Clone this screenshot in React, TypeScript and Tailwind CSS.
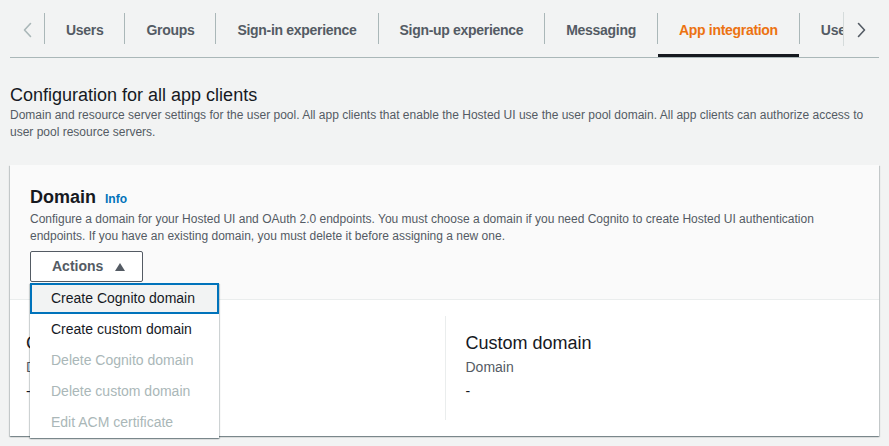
import React from "react";

const tabs = [
  "Users",
  "Groups",
  "Sign-in experience",
  "Sign-up experience",
  "Messaging",
  "App integration",
  "User pool properties",
];

const items = [
  { label: "Create Cognito domain", disabled: false, active: true },
  { label: "Create custom domain", disabled: false, active: false },
  { label: "Delete Cognito domain", disabled: true, active: false },
  { label: "Delete custom domain", disabled: true, active: false },
  { label: "Edit ACM certificate", disabled: true, active: false },
];

function Sep() {
  return <div className="w-px h-[31px] bg-[#aab7b8] flex-none" />;
}

function Chevron({ dir, color }: { dir: "left" | "right"; color: string }) {
  return (
    <svg width="11" height="16" viewBox="0 0 11 16" fill="none">
      <path
        d={dir === "left" ? "M8.5 1.5 L2.5 8 L8.5 14.5" : "M2.5 1.5 L8.5 8 L2.5 14.5"}
        stroke={color}
        strokeWidth="1.6"
        strokeLinecap="round"
        strokeLinejoin="round"
      />
    </svg>
  );
}

export default function App() {
  return (
    <div className="min-h-screen bg-[#f2f3f3] font-['Liberation_Sans',Arial,sans-serif] text-[#16191f]">
      <div className="px-[10px]">
        {/* Tabs */}
        <div className="flex items-center h-[58px] border-b border-[#aab7b8]">
          <button className="w-[34px] h-full flex items-center justify-center flex-none pt-[3px]">
            <Chevron dir="left" color="#aab7b8" />
          </button>
          <Sep />
          <div className="flex-1 h-full flex items-center overflow-hidden whitespace-nowrap">
            {tabs.map((t, i) => {
              const active = t === "App integration";
              return (
                <React.Fragment key={t}>
                  {i > 0 && <Sep />}
                  <div
                    className={
                      "relative h-full flex items-center flex-none px-[21px] pt-[4px] text-[14px] font-bold tracking-[-0.3px] " +
                      (active ? "text-[#ec7211]" : "text-[#545b64]")
                    }
                  >
                    {t}
                    {active && (
                      <div className="absolute left-0 right-0 bottom-0 h-[3px] bg-[#16191f]" />
                    )}
                  </div>
                </React.Fragment>
              );
            })}
          </div>
          <div className="w-px h-[34px] bg-[#d5dbdb] flex-none" />
          <button className="w-[35px] h-full flex items-center justify-center flex-none pt-[3px]">
            <Chevron dir="right" color="#545b64" />
          </button>
        </div>

        {/* Page heading */}
        <h2 className="mt-[26px] text-[18px] leading-[22px] font-normal text-[#16191f]">
          Configuration for all app clients
        </h2>
        <p className="mt-[1px] text-[12px] leading-[17px] text-[#545b64]">
          Domain and resource server settings for the user pool. All app clients that enable the Hosted UI use the
          user pool domain. All app clients can authorize access to user pool resource servers.
        </p>

        {/* Card */}
        <div className="mt-[24px] bg-white shadow-[0_1px_1px_0_rgba(0,28,36,0.3),1px_1px_1px_0_rgba(0,28,36,0.15),-1px_1px_1px_0_rgba(0,28,36,0.15)]">
          <div className="bg-[#fafafa] border-b border-[#eaeded] pt-[21px] px-[20px] pb-[17px]">
            <div className="flex items-baseline">
              <h3 className="text-[18px] leading-[22px] font-bold text-[#16191f]">Domain</h3>
              <span className="ml-[9px] text-[12px] font-bold text-[#0073bb]">Info</span>
            </div>
            <p className="mt-[3px] text-[12px] leading-[17px] text-[#545b64]">
              Configure a domain for your Hosted UI and OAuth 2.0 endpoints. You must choose a domain if you need
              Cognito to create Hosted UI authentication endpoints. If you have an existing domain, you must delete it
              before assigning a new one.
            </p>
            <div className="relative mt-[6px] inline-block align-top">
              <button className="h-[31px] w-[113px] flex items-center pl-[21px] border border-[#545b64] rounded-[2px] bg-white text-[14px] font-bold text-[#545b64]">
                Actions
                <svg className="ml-[12px]" width="10" height="8" viewBox="0 0 10 8">
                  <polygon points="5,0 10,8 0,8" fill="#545b64" />
                </svg>
              </button>
              <div className="absolute left-0 top-[32px] w-[189px] bg-white z-10 shadow-[0_1px_1px_0_rgba(0,28,36,0.3),1px_1px_1px_0_rgba(0,28,36,0.15),-1px_1px_1px_0_rgba(0,28,36,0.15)]">
                {items.map((it) => (
                  <div
                    key={it.label}
                    className={
                      "h-[31px] flex items-center px-[19px] border-2 text-[14px] whitespace-nowrap " +
                      (it.active ? "border-[#0073bb] bg-[#f2f3f3] " : "border-transparent ") +
                      (it.disabled ? "text-[#aab7b8]" : "text-[#16191f]")
                    }
                  >
                    {it.label}
                  </div>
                ))}
              </div>
            </div>
          </div>

          <div className="px-[16px] pt-[16px] pb-[16px] grid grid-cols-2">
            <div className="pt-[16px] pb-[18px] pr-[20px]">
              <div className="text-[18px] leading-[22px]">Cognito domain</div>
              <div className="mt-[2px] text-[14px] leading-[22px] text-[#545b64]">Domain</div>
              <div className="mt-[2px] text-[14px] leading-[22px]">-</div>
            </div>
            <div className="pt-[16px] pb-[18px] pl-[20px] border-l border-[#eaeded]">
              <div className="text-[18px] leading-[22px]">Custom domain</div>
              <div className="mt-[2px] text-[14px] leading-[22px] text-[#545b64]">Domain</div>
              <div className="mt-[2px] text-[14px] leading-[22px]">-</div>
            </div>
          </div>
        </div>
      </div>
    </div>
  );
}
